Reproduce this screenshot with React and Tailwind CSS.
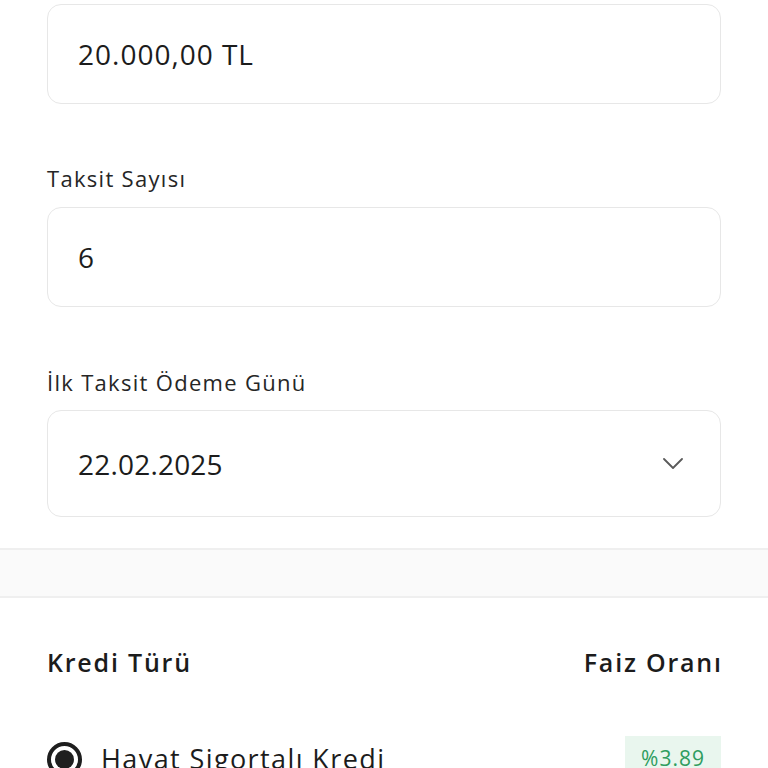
import React from "react";

// form field box used for amount / count / date
function FieldBox({ children, tall }) {
  return (
    <div
      className={
        "flex items-center justify-between rounded-[14px] border-[1.5px] border-[#e7e7e7] bg-white pl-[30px] pr-[37px] " +
        (tall ? "h-[107px]" : "h-[100px]")
      }
    >
      {children}
    </div>
  );
}

function Label({ children }) {
  return (
    <div className="text-[22px] leading-[28px] text-[#262626] tracking-[1.3px]">{children}</div>
  );
}

export default function App() {
  return (
    <div
      className="w-full min-h-[768px] bg-white text-[#1c1c1c] overflow-hidden"
      style={{ fontFamily: '"Open Sans", "Liberation Sans", sans-serif' }}
    >
      <div className="px-[47px] pt-[4px]">
        <FieldBox>
          <span className="text-[28px] tracking-[1px]">20.000,00 TL</span>
        </FieldBox>

        <div className="mt-[60px] mb-[15px]">
          <Label>Taksit Sayısı</Label>
        </div>
        <FieldBox>
          <span className="text-[28px] tracking-[1px]">6</span>
        </FieldBox>

        <div className="mt-[61px] mb-[14px]">
          <Label>İlk Taksit Ödeme Günü</Label>
        </div>
        <FieldBox tall>
          <span className="text-[28px] tracking-[0.2px]">22.02.2025</span>
          <svg width="20" height="11" viewBox="0 0 20 11" fill="none">
            <path d="M1 1l9 9 9-9" stroke="#5a5a5a" strokeWidth="1.8" strokeLinecap="round" strokeLinejoin="round" />
          </svg>
        </FieldBox>
      </div>

      {/* divider strip */}
      <div className="mt-[31px] h-[50px] border-y-2 border-[#efefef] bg-[#fafafa]" />

      <div className="px-[47px]">
        <div className="mt-[48px] flex items-center justify-between text-[25px] leading-[32px] font-semibold tracking-[1.8px]">
          <span>Kredi Türü</span>
          <span className="-mr-[1.8px]">Faiz Oranı</span>
        </div>

        <div className="mt-[58px] flex items-center justify-between">
          <div className="flex items-center gap-[19px]">
            <div className="w-[35px] h-[35px] rounded-full border-[4px] border-[#1e1e1e] flex items-center justify-center">
              <div className="w-[19px] h-[19px] rounded-full bg-[#1e1e1e]" />
            </div>
            <span className="text-[27px] leading-[36px] tracking-[1.4px]">Hayat Sigortalı Kredi</span>
          </div>
          <div className="h-[46px] px-[16px] flex items-center bg-[#e9f6ee] text-[#2f9d5f] text-[21px] tracking-[1px]">
            %3.89
          </div>
        </div>
      </div>
    </div>
  );
}
